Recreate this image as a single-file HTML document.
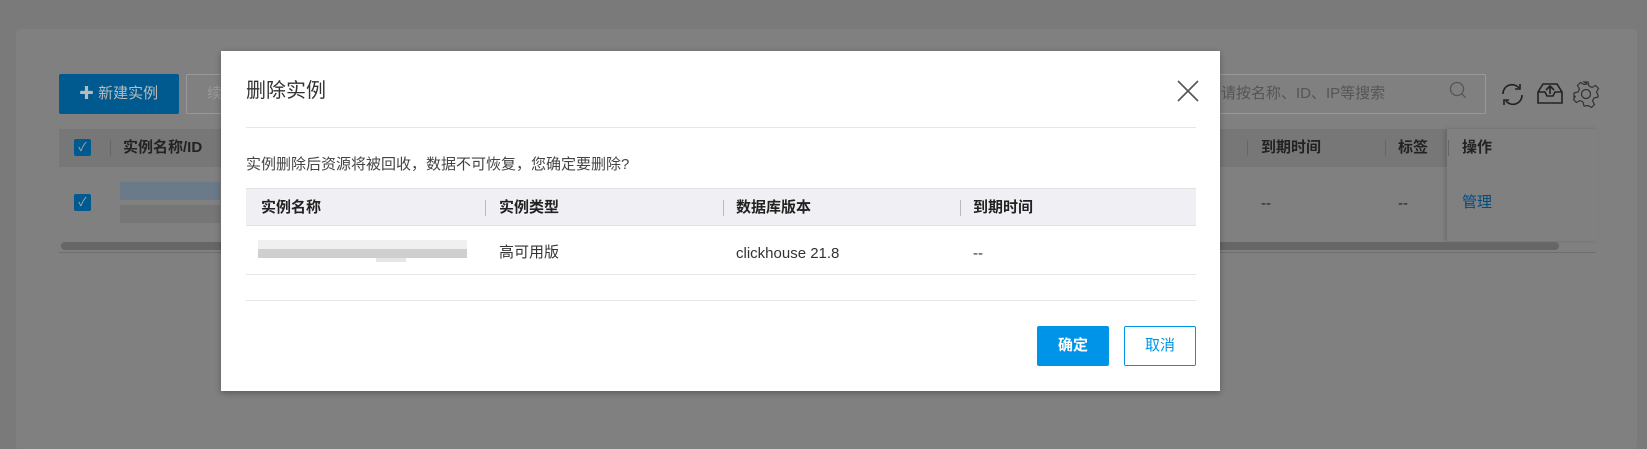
<!DOCTYPE html><html><head><meta charset="utf-8"><style>
*{margin:0;padding:0;box-sizing:border-box}
body{width:1647px;height:442px;background:#7a7a7a;position:relative;overflow:hidden;font-family:"Liberation Sans","Noto Sans CJK SC",sans-serif;color:#333}
.a{position:absolute}
.card{left:16px;top:29px;width:1621px;height:420px;background:#808080;border-radius:4px}
.dlg{left:221px;top:51px;width:999px;height:340px;background:#fff;box-shadow:0 2px 6px rgba(0,0,0,.3)}
.hd{font-weight:bold;font-size:15px;color:#222;line-height:20px}
.t{font-size:15px;line-height:20px}
.sep{width:1px;height:16px;background:#bbb}
</style></head><body>
<div class="a card"></div>
<div class="a" style="left:59px;top:74px;width:120px;height:40px;background:#005a8f;border-radius:2px;color:#bbb;font-size:15px;line-height:40px;padding-left:20px">✚ 新建实例</div>
<div class="a" style="left:186px;top:74px;width:40px;height:40px;border:1px solid #999;border-radius:2px;color:#999;font-size:15px;line-height:38px;padding-left:20px">续</div>
<div class="a" style="left:1150px;top:74px;width:336px;height:40px;border:1px solid #999;border-radius:2px;color:#555;font-size:15px;line-height:38px;padding-left:70px">请按名称、ID、IP等搜索</div>
<svg class="a" style="left:1448px;top:80px" width="20" height="22"><circle cx="9" cy="9" r="6.5" fill="none" stroke="#555" stroke-width="1.3"/><path d="M13.5 13.5l4 4" stroke="#555" stroke-width="1.3"/></svg>
<svg class="a" style="left:1498px;top:80px" width="30" height="30"><path d="M5 14a9 9 0 0 1 16-6M24 15a9 9 0 0 1-16 6" fill="none" stroke="#222" stroke-width="1.6"/><path d="M22 4v5h-5M6 25v-5h5" fill="none" stroke="#222" stroke-width="1.6"/></svg>
<svg class="a" style="left:1535px;top:80px" width="30" height="26"><path d="M3 12l5-8h14l5 8v11H3zM3 12h7l2 4h6l2-4h7" fill="none" stroke="#222" stroke-width="1.6"/><path d="M15 14V6M11 10l4-4 4 4" fill="none" stroke="#222" stroke-width="1.6"/></svg>
<svg class="a" style="left:1572px;top:80px" width="28" height="28"><circle cx="14" cy="14" r="4.5" fill="none" stroke="#333" stroke-width="1.3"/><path d="M12 2h4l1 4 3 1.5 3.5-2 3 3-2 3.5L26 15v2l-4 1-1.5 3 2 3.5-3 3-3.5-2L13 26l-1 0-1-4-3-1.5-3.5 2-3-3 2-3.5L2 17v-4l4-1 1.5-3-2-3.5 3-3 3.5 2L15 4z" fill="none" stroke="#333" stroke-width="1.2"/></svg>
<div class="a" style="left:59px;top:129px;width:1537px;height:38px;background:#777"></div>
<div class="a" style="left:1447px;top:129px;width:150px;height:112px;background:#808080;box-shadow:-2px 0 4px rgba(0,0,0,.15)"></div>
<div class="a" style="left:74px;top:139px;width:17px;height:17px;background:#005a8f;border-radius:2px;color:#aaa;font-size:12px;text-align:center;line-height:17px">✓</div>
<div class="a" style="left:74px;top:194px;width:17px;height:17px;background:#005a8f;border-radius:2px;color:#aaa;font-size:12px;text-align:center;line-height:17px">✓</div>
<div class="a sep" style="left:110px;top:140px;background:#666"></div>
<div class="a hd" style="left:123px;top:138px;color:#222">实例名称/ID</div>
<div class="a" style="left:120px;top:182px;width:100px;height:18px;background:#6b7a88"></div>
<div class="a" style="left:120px;top:205px;width:100px;height:18px;background:#767676"></div>
<div class="a sep" style="left:1247px;top:140px;background:#666"></div>
<div class="a hd" style="left:1261px;top:138px;color:#222">到期时间</div>
<div class="a sep" style="left:1385px;top:140px;background:#666"></div>
<div class="a hd" style="left:1398px;top:138px;color:#222">标签</div>
<div class="a sep" style="left:1448px;top:140px;background:#666"></div>
<div class="a hd" style="left:1462px;top:138px;color:#222">操作</div>
<div class="a t" style="left:1261px;top:194px;color:#222">--</div>
<div class="a t" style="left:1398px;top:194px;color:#222">--</div>
<div class="a t" style="left:1462px;top:193px;color:#004b80">管理</div>
<div class="a" style="left:61px;top:242px;width:1498px;height:8px;background:#666;border-radius:4px"></div>
<div class="a" style="left:59px;top:252px;width:1537px;height:1px;background:#6e6e6e"></div>
<div class="a dlg">
<div class="a" style="left:25px;top:27px;font-size:20px;line-height:26px;color:#333">删除实例</div>
<svg class="a" style="left:955px;top:28px" width="24" height="24"><path d="M2 2l20 20M22 2L2 22" stroke="#555" stroke-width="1.6"/></svg>
<div class="a" style="left:25px;top:76px;width:950px;height:1px;background:#e6e6e6"></div>
<div class="a t" style="left:25px;top:104px;color:#444">实例删除后资源将被回收，数据不可恢复，您确定要删除?</div>
<div class="a" style="left:25px;top:137px;width:950px;height:38px;background:#f0f0f4;border-top:1px solid #e2e2e6;border-bottom:1px solid #e2e2e6"></div>
<div class="a hd" style="left:40px;top:147px">实例名称</div>
<div class="a sep" style="left:264px;top:149px"></div>
<div class="a hd" style="left:278px;top:147px">实例类型</div>
<div class="a sep" style="left:502px;top:149px"></div>
<div class="a hd" style="left:515px;top:147px">数据库版本</div>
<div class="a sep" style="left:739px;top:149px"></div>
<div class="a hd" style="left:752px;top:147px">到期时间</div>
<div class="a" style="left:37px;top:189px;width:209px;height:9px;background:#f0f0f0"></div>
<div class="a" style="left:37px;top:198px;width:209px;height:9px;background:#cfcfcf"></div>
<div class="a" style="left:155px;top:207px;width:30px;height:4px;background:#e6e6e6"></div>
<div class="a t" style="left:278px;top:192px;color:#333">高可用版</div>
<div class="a t" style="left:515px;top:193px;color:#333">clickhouse 21.8</div>
<div class="a t" style="left:752px;top:193px;color:#333">--</div>
<div class="a" style="left:25px;top:223px;width:950px;height:1px;background:#e6e6e6"></div>
<div class="a" style="left:25px;top:249px;width:950px;height:1px;background:#e6e6e6"></div>
<div class="a" style="left:816px;top:275px;width:72px;height:40px;background:#0094e8;border-radius:2px;color:#fff;font-size:15px;font-weight:bold;text-align:center;line-height:40px">确定</div>
<div class="a" style="left:903px;top:275px;width:72px;height:40px;border:1px solid #0094e8;border-radius:2px;color:#0094e8;font-size:15px;text-align:center;line-height:38px">取消</div>
</div>
</body></html>
